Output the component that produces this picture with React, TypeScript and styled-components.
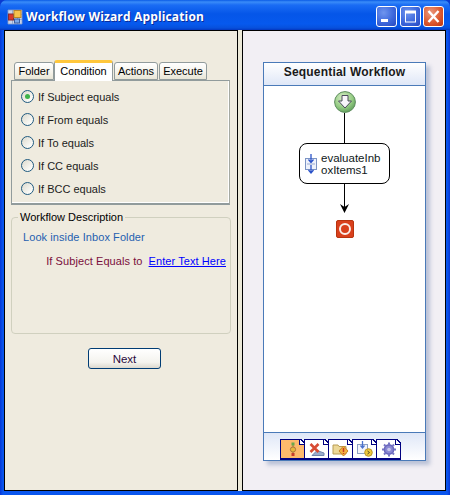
import * as React from 'react'
import styled, { createGlobalStyle } from 'styled-components'

const GlobalStyle = createGlobalStyle`
  html, body {
    margin: 0;
    padding: 0;
    background: #0a3ad0;
  }
  * {
    box-sizing: border-box;
  }
`

const Window = styled.div`
  width: 450px;
  height: 495px;
  display: flex;
  flex-direction: column;
  overflow: hidden;
  border-radius: 7px 7px 0 0;
  background: linear-gradient(90deg, #0737d6 0, #0a56ee 3px, #0a56ee 447px, #0737d6 450px);
  font-family: 'Liberation Sans', Arial, sans-serif;
  font-size: 11px;
`

const TitleBar = styled.div`
  height: 30px;
  flex: none;
  display: flex;
  align-items: center;
  padding: 3px 6px 0 7px;
  background: linear-gradient(
    180deg,
    #0a5be6 0,
    #3a8cf8 2px,
    #1a6cf4 5px,
    #0556e8 14px,
    #0659ee 24px,
    #0750dc 28px,
    #0337c0 30px
  );
`

const TitleText = styled.div`
  margin-left: 3px;
  flex: 1;
  color: #fff;
  font-family: 'Open Sans', sans-serif;
  font-size: 12px;
  font-weight: 700;
  letter-spacing: 0.15px;
  white-space: nowrap;
  text-shadow: 1px 1px 0 #0a2c9a;
`

const CaptionButtons = styled.div`
  display: flex;
  gap: 2.5px;
`

const CaptionButton = styled.div<{ $close?: boolean }>`
  width: 21px;
  height: 21px;
  border: 1px solid #fff;
  border-radius: 3px;
  background: ${(p) =>
    p.$close
      ? 'radial-gradient(circle at 35% 30%, #ea9a80 0, #dd5a30 55%, #bf3410 100%)'
      : 'radial-gradient(circle at 35% 30%, #6f95ee 0, #3d68dc 55%, #2647c0 100%)'};
  svg {
    display: block;
  }
`

const Client = styled.div`
  flex: 1;
  display: flex;
  margin: 0 4px 4px;
  background: #ece9d8;
  min-height: 0;
`

const LeftPanel = styled.div`
  width: 234px;
  flex: none;
  border: 1px solid #000;
  background: #efebdf;
  padding: 29px 6px 0 6px;
  display: flex;
  flex-direction: column;
`

const Splitter = styled.div`
  width: 4px;
  flex: none;
  background: #ece9d8;
`

const RightPanel = styled.div`
  flex: 1;
  border: 1px solid #000;
  background: #f2eff4;
  padding: 31px 0 0 20px;
`

const TabStrip = styled.div`
  display: flex;
  align-items: flex-end;
  height: 21px;
  padding-left: 3px;
  position: relative;
  z-index: 1;
  margin-bottom: -1px;
`

const Tab = styled.div<{ $active?: boolean; $width: number; $gap: boolean }>`
  height: ${(p) => (p.$active ? 21 : 18)}px;
  width: ${(p) => p.$width}px;
  margin-right: ${(p) => (p.$gap ? 1 : 0)}px;
  margin-bottom: ${(p) => (p.$active ? 0 : 1)}px;
  border: 1px solid #919b9c;
  border-bottom: ${(p) => (p.$active ? '0' : '1px solid #919b9c')};
  border-top: ${(p) => (p.$active ? '3px solid #ffc73c' : '1px solid #919b9c')};
  border-radius: 3px 3px 0 0;
  background: ${(p) => (p.$active ? '#fff' : 'linear-gradient(180deg, #fff 0, #f4f2ea 60%, #e8e5d6 100%)')};
  color: #000;
  font-size: 11px;
  line-height: 16px;
  text-align: center;
  white-space: nowrap;
`

const TabPage = styled.div`
  width: 219px;
  height: 125px;
  border: 1px solid #919b9c;
  border-right-color: #a5a9a2;
  border-bottom-width: 2px;
  box-shadow: inset -1px -1px 0 #fff;
  background: #efebdf;
  padding: 9px 0 0 9px;
  display: flex;
  flex-direction: column;
  gap: 10px;
`

const RadioRow = styled.label`
  display: flex;
  align-items: center;
  height: 13px;
  gap: 4px;
  color: #1c1c1c;
  font-size: 11px;
  white-space: nowrap;
`

const RadioCircle = styled.span<{ $checked?: boolean }>`
  width: 13px;
  height: 13px;
  border-radius: 50%;
  border: 1px solid #1f5a80;
  background: linear-gradient(135deg, #dcd9cc 0, #fbfbf8 80%);
  display: flex;
  align-items: center;
  justify-content: center;
  &::after {
    content: '';
    width: 5px;
    height: 5px;
    border-radius: 50%;
    background: ${(p) => (p.$checked ? '#3fb34a' : 'transparent')};
  }
`

const GroupBox = styled.fieldset`
  margin: 5px 0 0 0;
  width: 220px;
  height: 124px;
  padding: 0;
  border: 1px solid #d0d0bf;
  border-radius: 4px;
  display: flex;
  flex-direction: column;
`

const GroupLegend = styled.legend`
  margin-left: 6px;
  padding: 0 2px;
  font-size: 11px;
  line-height: 14px;
  color: #000;
`

const InboxLine = styled.div`
  margin: 6px 0 0 11px;
  color: #1f5fb0;
  font-size: 11px;
  line-height: 14px;
  letter-spacing: 0.08px;
`

const ConditionLine = styled.div`
  margin: 10px 4px 0 0;
  display: flex;
  justify-content: flex-end;
  gap: 6px;
  font-size: 11px;
  line-height: 14px;
  letter-spacing: 0.08px;
`

const ConditionText = styled.span`
  color: #7a0f3c;
`

const TextLink = styled.a`
  color: #0000ff;
  text-decoration: underline;
`

const NextRow = styled.div`
  margin-top: 14px;
  padding-left: 77px;
`

const NextButton = styled.button`
  display: block;
  width: 73px;
  height: 21px;
  padding: 0;
  border: 1px solid #003c74;
  border-radius: 3px;
  background: linear-gradient(180deg, #fff 0, #f4f3ee 70%, #dcd8ce 100%);
  color: #2a0a3c;
  font-family: inherit;
  font-size: 11.5px;
`

const Designer = styled.div`
  width: 163px;
  height: 399px;
  display: flex;
  flex-direction: column;
  border: 1px solid #4a7ab8;
  background: #fff;
  box-shadow: 4px 4px 4px rgba(120, 140, 180, 0.45);
`

const DesignerHeader = styled.div`
  height: 23px;
  flex: none;
  border-bottom: 1px solid #4a7ab8;
  background: linear-gradient(180deg, #fff 0, #dfe7f7 100%);
  color: #1a1a1a;
  font-size: 12px;
  font-weight: 700;
  line-height: 19px;
  letter-spacing: 0.2px;
  text-align: center;
`

const Canvas = styled.div`
  flex: 1;
  display: flex;
  flex-direction: column;
  align-items: center;
  padding-top: 5px;
`

const Connector = styled.div<{ $height: number }>`
  width: 1px;
  height: ${(p) => p.$height}px;
  background: #000;
  flex: none;
`

const ActivityCard = styled.div`
  width: 91px;
  height: 41px;
  flex: none;
  display: flex;
  align-items: center;
  gap: 3px;
  padding: 0 0 0 4px;
  border: 1px solid #000;
  border-radius: 8px;
  background: #fff;
`

const ActivityName = styled.div`
  color: #101820;
  font-size: 11.5px;
  line-height: 12px;
  width: 60px;
  word-break: break-all;
`

const ArrowGap = styled.div`
  height: 7px;
  flex: none;
`

const DesignerFooter = styled.div`
  height: 28px;
  flex: none;
  border-top: 1px solid #4a7ab8;
  background: linear-gradient(180deg, #dfe7f7 0, #fff 100%);
  display: flex;
  align-items: flex-end;
  padding-left: 16px;
`

const ViewTab = styled.div<{ $active?: boolean }>`
  width: 25px;
  height: 21px;
  margin-right: -1px;
  border: 1px solid #000080;
  border-bottom-width: 2px;
  background: ${(p) => (p.$active ? '#fdb96c' : '#fff')};
  position: relative;
  display: flex;
  align-items: center;
  justify-content: center;
  &::after {
    content: '';
    position: absolute;
    top: -1px;
    right: -1px;
    width: 5px;
    height: 5px;
    background: linear-gradient(45deg, #fff 0, #fff 45%, #000080 45%, #000080 65%, #e8eefa 65%);
    border-left: 1px solid #000080;
    border-bottom: 1px solid #000080;
  }
`

const AppIcon = () => (
  <svg width="16" height="16" viewBox="0 0 16 16" style={{ flex: 'none' }}>
    <path d="M1 1h14v14H1zM1 5.5h14M1 10.5h14M5.5 1v14M10.5 1v14" fill="#c8d4ea" stroke="#8aa0c8" strokeWidth="0.8" />
    <rect x="1.5" y="5" width="5" height="6" fill="#d8382c" stroke="#8a2a30" />
    <rect x="7" y="1.5" width="7" height="7" fill="#f6c24c" stroke="#b8862a" />
    <rect x="7.5" y="10" width="5" height="4" fill="#7ca8ea" stroke="#3a5ea0" />
  </svg>
)

const MinimizeGlyph = () => (
  <svg width="19" height="19" viewBox="0 0 19 19">
    <rect x="4" y="12" width="7" height="3" fill="#fff" />
  </svg>
)

const MaximizeGlyph = () => (
  <svg width="19" height="19" viewBox="0 0 19 19">
    <rect x="4.5" y="4" width="10" height="11" fill="none" stroke="#fff" />
    <rect x="4" y="4" width="11" height="2.5" fill="#fff" />
  </svg>
)

const CloseGlyph = () => (
  <svg width="19" height="19" viewBox="0 0 19 19">
    <path d="M4.5 4l10 11M14.5 4l-10 11" stroke="#fff" strokeWidth="2.4" />
  </svg>
)

const StartIcon = () => (
  <svg width="22" height="22" viewBox="0 0 22 22" style={{ flex: 'none' }}>
    <defs>
      <radialGradient id="startFill" cx="40%" cy="30%" r="75%">
        <stop offset="0" stopColor="#d8edc8" />
        <stop offset="0.6" stopColor="#96cc84" />
        <stop offset="1" stopColor="#5c9c58" />
      </radialGradient>
    </defs>
    <circle cx="11" cy="11" r="10.4" fill="url(#startFill)" stroke="#5c8c5c" />
    <path d="M8 4.5h6v5.5h3.5L11 17 4.5 10H8z" fill="#f8f6fa" stroke="#4c4c5c" />
  </svg>
)

const StopIcon = () => (
  <svg width="18" height="18" viewBox="0 0 18 18" style={{ flex: 'none' }}>
    <rect x="0.5" y="0.5" width="17" height="17" rx="1.5" fill="#d9401c" stroke="#b8340f" />
    <circle cx="9" cy="9" r="5" fill="none" stroke="#fbeee8" strokeWidth="2" />
  </svg>
)

const ArrowHead = () => (
  <svg width="9" height="9" viewBox="0 0 9 9" style={{ flex: 'none', marginTop: -5 }}>
    <path d="M0 0l4.5 3L9 0 4.5 9z" fill="#000" />
  </svg>
)

const ActivityIcon = () => (
  <svg width="14" height="20" viewBox="0 0 14 20" style={{ flex: 'none' }}>
    <rect x="1.5" y="4.5" width="11" height="11" fill="#eef2fb" stroke="#7c94c4" />
    <path d="M7 0v8M4.5 5.5L7 8.5l2.5-3M7 11v8M4.5 16L7 19l2.5-3" fill="none" stroke="#2a52c8" strokeWidth="1.3" />
    <path d="M3 10h8" stroke="#9aaad0" />
  </svg>
)

const WorkflowViewIcon = () => (
  <svg width="10" height="15" viewBox="0 0 10 15">
    <path d="M5 1v13" stroke="#a8763c" />
    <rect x="3.5" y="0.5" width="3" height="3" fill="#6aa84c" />
    <circle cx="5" cy="7.5" r="2.6" fill="#e8b83c" stroke="#a8763c" />
    <rect x="3.5" y="11" width="3" height="3" fill="#c83c2c" />
  </svg>
)

const CancelViewIcon = () => (
  <svg width="17" height="15" viewBox="0 0 17 15">
    <path d="M4 13.5l5-5 7 2.5v2.5z" fill="#9aaccc" stroke="#7084ac" />
    <path d="M2.5 2l8 8M10.5 2l-8 8" stroke="#d84c34" strokeWidth="2.6" />
  </svg>
)

const FaultViewIcon = () => (
  <svg width="18" height="15" viewBox="0 0 18 15">
    <path d="M1 3h5l1 1.5h7V12H1z" fill="#ecd898" stroke="#b89c54" />
    <path d="M11.5 4l4.5 5-4.5 5-4.5-5z" fill="#f4b040" stroke="#c88428" />
    <path d="M11.5 6v4M11.5 11v1" stroke="#c83c24" strokeWidth="1.5" />
  </svg>
)

const EventViewIcon = () => (
  <svg width="18" height="16" viewBox="0 0 18 16">
    <rect x="1.5" y="3.5" width="10" height="9" fill="#f2f4fa" stroke="#8ca0c4" />
    <path d="M6.5 0v7M4.5 4.5l2 2.5 2-2.5" fill="none" stroke="#4a72cc" strokeWidth="1.3" />
    <circle cx="12.5" cy="11.5" r="3.8" fill="#eec83c" stroke="#b89428" />
    <path d="M11.5 10l2 1.5-2 1.5" fill="none" stroke="#5c4c20" />
  </svg>
)

const SettingsViewIcon = () => (
  <svg width="16" height="15" viewBox="0 0 16 15">
    <circle cx="8" cy="7.5" r="4.6" fill="#8a88d4" stroke="#6a68bc" strokeWidth="1.6" />
    <circle cx="8" cy="7.5" r="1.8" fill="#c8c8ec" />
    <path
      d="M8 0.5v2.2M8 12.3v2.2M1 7.5h2.2M12.8 7.5H15M3 2.5l1.6 1.6M11.4 10.9l1.6 1.6M13 2.5l-1.6 1.6M4.6 10.9L3 12.5"
      stroke="#7674c4"
      strokeWidth="2"
    />
  </svg>
)

const tabs = [
  { label: 'Folder', width: 40, gap: false },
  { label: 'Condition', width: 59, gap: true },
  { label: 'Actions', width: 44, gap: true },
  { label: 'Execute', width: 48, gap: false },
]

const conditions = ['If Subject equals', 'If From equals', 'If To equals', 'If CC equals', 'If BCC equals']

const viewTabs = [
  <WorkflowViewIcon key="workflow" />,
  <CancelViewIcon key="cancel" />,
  <FaultViewIcon key="fault" />,
  <EventViewIcon key="event" />,
  <SettingsViewIcon key="settings" />,
]

const App = () => {
  return (
    <Window>
      <GlobalStyle />
      <TitleBar>
        <AppIcon />
        <TitleText>Workflow Wizard Application</TitleText>
        <CaptionButtons>
          <CaptionButton>
            <MinimizeGlyph />
          </CaptionButton>
          <CaptionButton>
            <MaximizeGlyph />
          </CaptionButton>
          <CaptionButton $close>
            <CloseGlyph />
          </CaptionButton>
        </CaptionButtons>
      </TitleBar>
      <Client>
        <LeftPanel>
          <TabStrip>
            {tabs.map((tab) => (
              <Tab key={tab.label} $active={tab.label === 'Condition'} $width={tab.width} $gap={tab.gap}>
                {tab.label}
              </Tab>
            ))}
          </TabStrip>
          <TabPage>
            {conditions.map((condition, index) => (
              <RadioRow key={condition}>
                <RadioCircle $checked={index === 0} />
                {condition}
              </RadioRow>
            ))}
          </TabPage>
          <GroupBox>
            <GroupLegend>Workflow Description</GroupLegend>
            <InboxLine>Look inside Inbox Folder</InboxLine>
            <ConditionLine>
              <ConditionText>If Subject Equals to</ConditionText>
              <TextLink>Enter Text Here</TextLink>
            </ConditionLine>
          </GroupBox>
          <NextRow>
            <NextButton>Next</NextButton>
          </NextRow>
        </LeftPanel>
        <Splitter />
        <RightPanel>
          <Designer>
            <DesignerHeader>Sequential Workflow</DesignerHeader>
            <Canvas>
              <StartIcon />
              <Connector $height={30} />
              <ActivityCard>
                <ActivityIcon />
                <ActivityName>evaluateInboxItems1</ActivityName>
              </ActivityCard>
              <Connector $height={25} />
              <ArrowHead />
              <ArrowGap />
              <StopIcon />
            </Canvas>
            <DesignerFooter>
              {viewTabs.map((icon, index) => (
                <ViewTab key={index} $active={index === 0}>
                  {icon}
                </ViewTab>
              ))}
            </DesignerFooter>
          </Designer>
        </RightPanel>
      </Client>
    </Window>
  )
}

export default App
